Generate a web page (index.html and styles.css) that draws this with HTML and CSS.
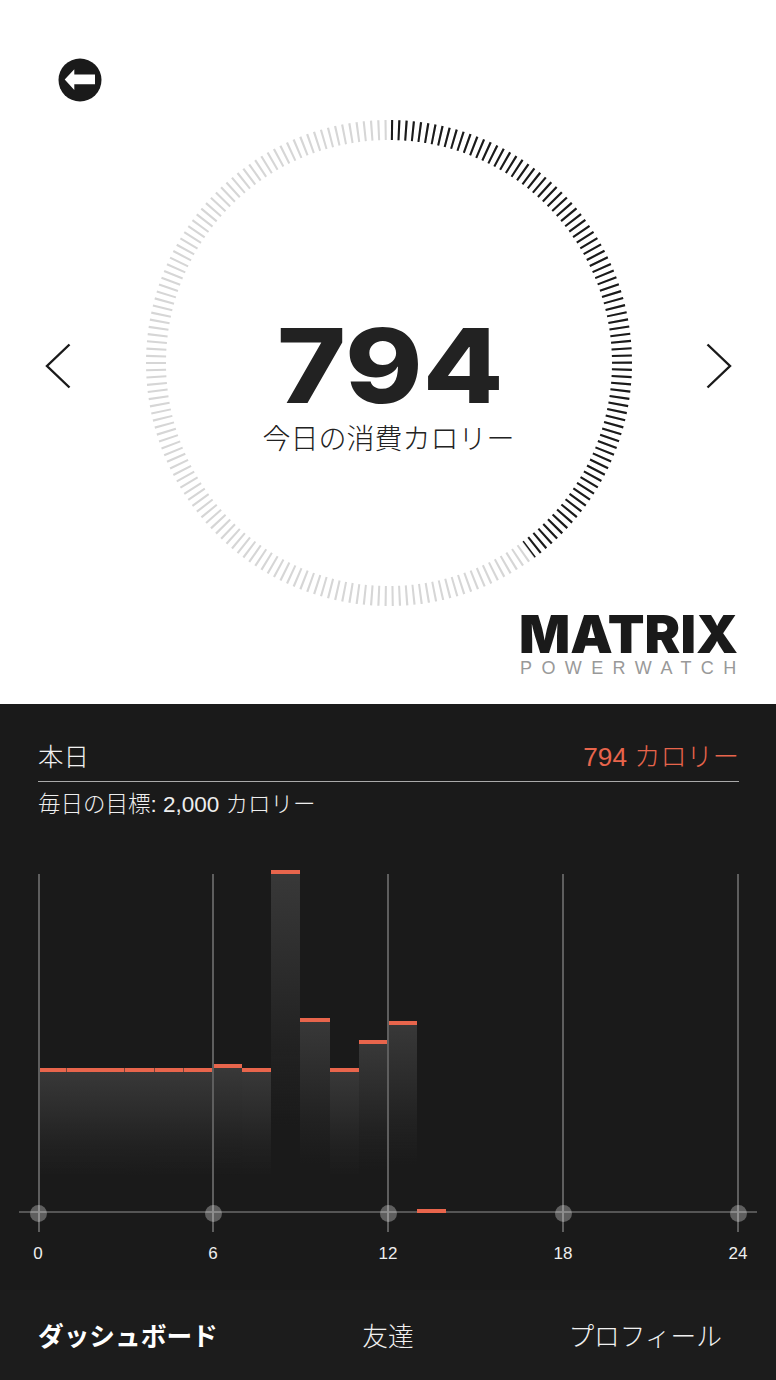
FILE: index.html
```html
<!DOCTYPE html>
<html lang="ja">
<head>
<meta charset="utf-8">
<title>MATRIX PowerWatch</title>
<link rel="stylesheet" href="styles.css">
</head>
<body>
<main class="app">
  <section class="hero">
    <button class="back" aria-label="戻る">
      <svg viewBox="0 0 44 44" width="44" height="44"><circle cx="22" cy="22" r="21.5" fill="#1a1a1a"/><path d="M6.7 21.6 16.3 11.3V16.4H37V26.2H16.3V32Z" fill="#fff"/></svg>
    </button>
    <div class="gauge-row">
      <svg class="chev" viewBox="0 0 28 48" width="28" height="48"><path d="M25.5 2.5 3 24 25.5 45.5" fill="none" stroke="#1a1a1a" stroke-width="2.4"/></svg>
      <div class="gauge">
        <svg class="ring" viewBox="0 0 486 486" width="486" height="486">
          <defs>
            <mask id="progress" maskUnits="userSpaceOnUse" x="0" y="0" width="486" height="486">
              <circle class="ring-mask" cx="243" cy="243" r="233"/>
            </mask>
          </defs>
          <circle class="ticks ticks-bg" cx="243" cy="243" r="233"/>
          <g mask="url(#progress)"><circle class="ticks ticks-on" cx="243" cy="243" r="233"/></g>
        </svg>
        <div class="readout">
          <div class="value">794</div>
          <div class="caption">今日の消費カロリー</div>
        </div>
      </div>
      <svg class="chev" viewBox="0 0 28 48" width="28" height="48"><path d="M2.5 2.5 25 24 2.5 45.5" fill="none" stroke="#1a1a1a" stroke-width="2.4"/></svg>
    </div>
    <div class="logo">
      <div class="logo-main">MATRIX</div>
      <div class="logo-sub">POWERWATCH</div>
    </div>
  </section>

  <section class="panel">
    <div class="panel-head">
      <span class="today">本日</span>
      <span class="total">794 カロリー</span>
    </div>
    <p class="goal">毎日の目標: 2,000 カロリー</p>

    <div class="chart">
      <div class="axis"></div>
      <div class="bars">
        <div class="bar seam" style="height:145px"></div>
        <div class="bar" style="height:145px"></div>
        <div class="bar seam" style="height:145px"></div>
        <div class="bar seam" style="height:145px"></div>
        <div class="bar seam" style="height:145px"></div>
        <div class="bar" style="height:145px"></div>
        <div class="bar" style="height:149px"></div>
        <div class="bar" style="height:145px"></div>
        <div class="bar" style="height:343px"></div>
        <div class="bar" style="height:195px"></div>
        <div class="bar" style="height:145px"></div>
        <div class="bar" style="height:173px"></div>
        <div class="bar" style="height:192px"></div>
        <div class="bar" style="height:4px"></div>
      </div>
      <div class="grid-lines">
        <div class="line"><i class="dot"></i></div>
        <div class="line"><i class="dot"></i></div>
        <div class="line"><i class="dot"></i></div>
        <div class="line"><i class="dot"></i></div>
        <div class="line"><i class="dot"></i></div>
      </div>
    </div>
    <div class="labels">
      <span>0</span><span>6</span><span>12</span><span>18</span><span>24</span>
    </div>
  </section>

  <nav class="tabs">
    <a class="tab tab-active">ダッシュボード</a>
    <a class="tab">友達</a>
    <a class="tab tab-last">プロフィール</a>
  </nav>
</main>
</body>
</html>
```

FILE: styles.css
```css
* { box-sizing: border-box; }
html, body { margin: 0; padding: 0; background: #fff; }
body { font-family: "Liberation Sans", "Noto Sans CJK JP", sans-serif; }
.app { width: 776px; height: 1380px; display: flex; flex-direction: column; overflow: hidden; }

.hero { height: 704px; background: #fff; padding-top: 58px; display: flex; flex-direction: column; }
.back { width: 44px; height: 44px; margin-left: 58px; padding: 0; border: 0; background: none; display: block; }
.back svg { display: block; }

.gauge-row { margin-top: 18px; padding: 0 43px 0 44px; display: flex; justify-content: space-between; align-items: center; }
.chev { display: block; margin-top: 6px; }
.gauge { width: 486px; height: 486px; display: grid; }
.ring, .readout { grid-area: 1 / 1; }
.ring { display: block; }
.ticks { fill: none; stroke-width: 20; stroke-dasharray: 2.1 4.871; stroke-dashoffset: -2; transform: rotate(-90deg); transform-origin: 243px 243px; }
.ticks-bg { stroke: #d6d6d6; }
.ticks-on { stroke: #1a1a1a; }
.ring-mask { fill: none; stroke: #fff; stroke-width: 24; stroke-dasharray: 582 2000; transform: rotate(-90deg); transform-origin: 243px 243px; }

.readout { display: flex; flex-direction: column; align-items: center; padding-top: 191px; }
.value { font-family: Inter, "Liberation Sans", sans-serif; font-weight: 800; font-size: 103px; line-height: 110px; color: #222; transform: translateX(2px) scaleX(1.14); }
.caption { font-size: 28px; line-height: 40px; font-weight: 300; color: #222; margin-top: -1px; }

.logo { margin: 6px 38px 0 0; align-self: flex-end; width: 218px; }
.logo-main { font-family: Inter, "Liberation Sans", sans-serif; font-weight: 900; font-size: 52px; line-height: 46px; color: #1a1a1a; transform-origin: 0 center; transform: translateX(-1px) scaleX(1.03); white-space: nowrap; }
.logo-sub { font-size: 18px; line-height: 18px; color: #999; letter-spacing: 9.4px; white-space: nowrap; margin-top: 1px; }

.panel { flex: 1; background: #1a1a1a; display: flex; flex-direction: column; }
.panel-head { margin: 0 37px 0 38px; height: 78px; padding-bottom: 6px; display: flex; justify-content: space-between; align-items: flex-end; border-bottom: 1px solid #aaa; }
.today { font-size: 25.5px; line-height: 36px; font-weight: 300; color: #f2f2f2; }
.total { font-size: 26.2px; line-height: 36px; font-weight: 300; color: #e8654c; }
.goal { margin: 9px 0 0 38px; font-size: 22.5px; line-height: 28px; font-weight: 300; color: #eee; }

.chart { margin: 51px 0 0 19px; width: 738px; height: 362px; display: grid; }
.bars, .axis, .grid-lines { grid-area: 1 / 1; }
.bars { display: flex; align-items: flex-end; padding: 0 0 19.5px 19px; margin-top: -2px; }
.bar { position: relative; width: 29.17px; flex: none; border-top: 4px solid #e8654c; background: linear-gradient(#383838, #2c2c2c 28%, #212121 52%, rgba(26,26,26,0) 74%); background-clip: padding-box; }
.seam::after { content: ""; position: absolute; right: 0; top: -4px; width: 1px; height: 4px; background: #7a463a; }
.axis { height: 2px; margin-top: 341px; background: #555; }
.grid-lines { display: flex; justify-content: space-between; padding: 4px 18px 0 18.5px; }
.line { position: relative; width: 2px; height: 358px; background: #5e5e5e; }
.dot { position: absolute; left: -7.5px; top: 330.5px; width: 17px; height: 17px; border-radius: 50%; background: rgba(255,255,255,.3); }

.labels { margin: 8px 0 0 18px; width: 740px; display: flex; justify-content: space-between; font-size: 17px; line-height: 28px; color: #eee; }
.labels span { width: 40px; text-align: center; }

.tabs { height: 90px; flex: none; background: #1c1c1c; padding: 0 38px; display: grid; grid-template-columns: 1fr auto 1fr; align-items: center; font-size: 25.7px; font-weight: 300; color: #f0f0f0; }
.tab { line-height: 36px; padding-top: 3px; }
.tab-active { font-weight: 700; color: #fff; }
.tab-last { justify-self: end; margin-right: 16px; }
```
